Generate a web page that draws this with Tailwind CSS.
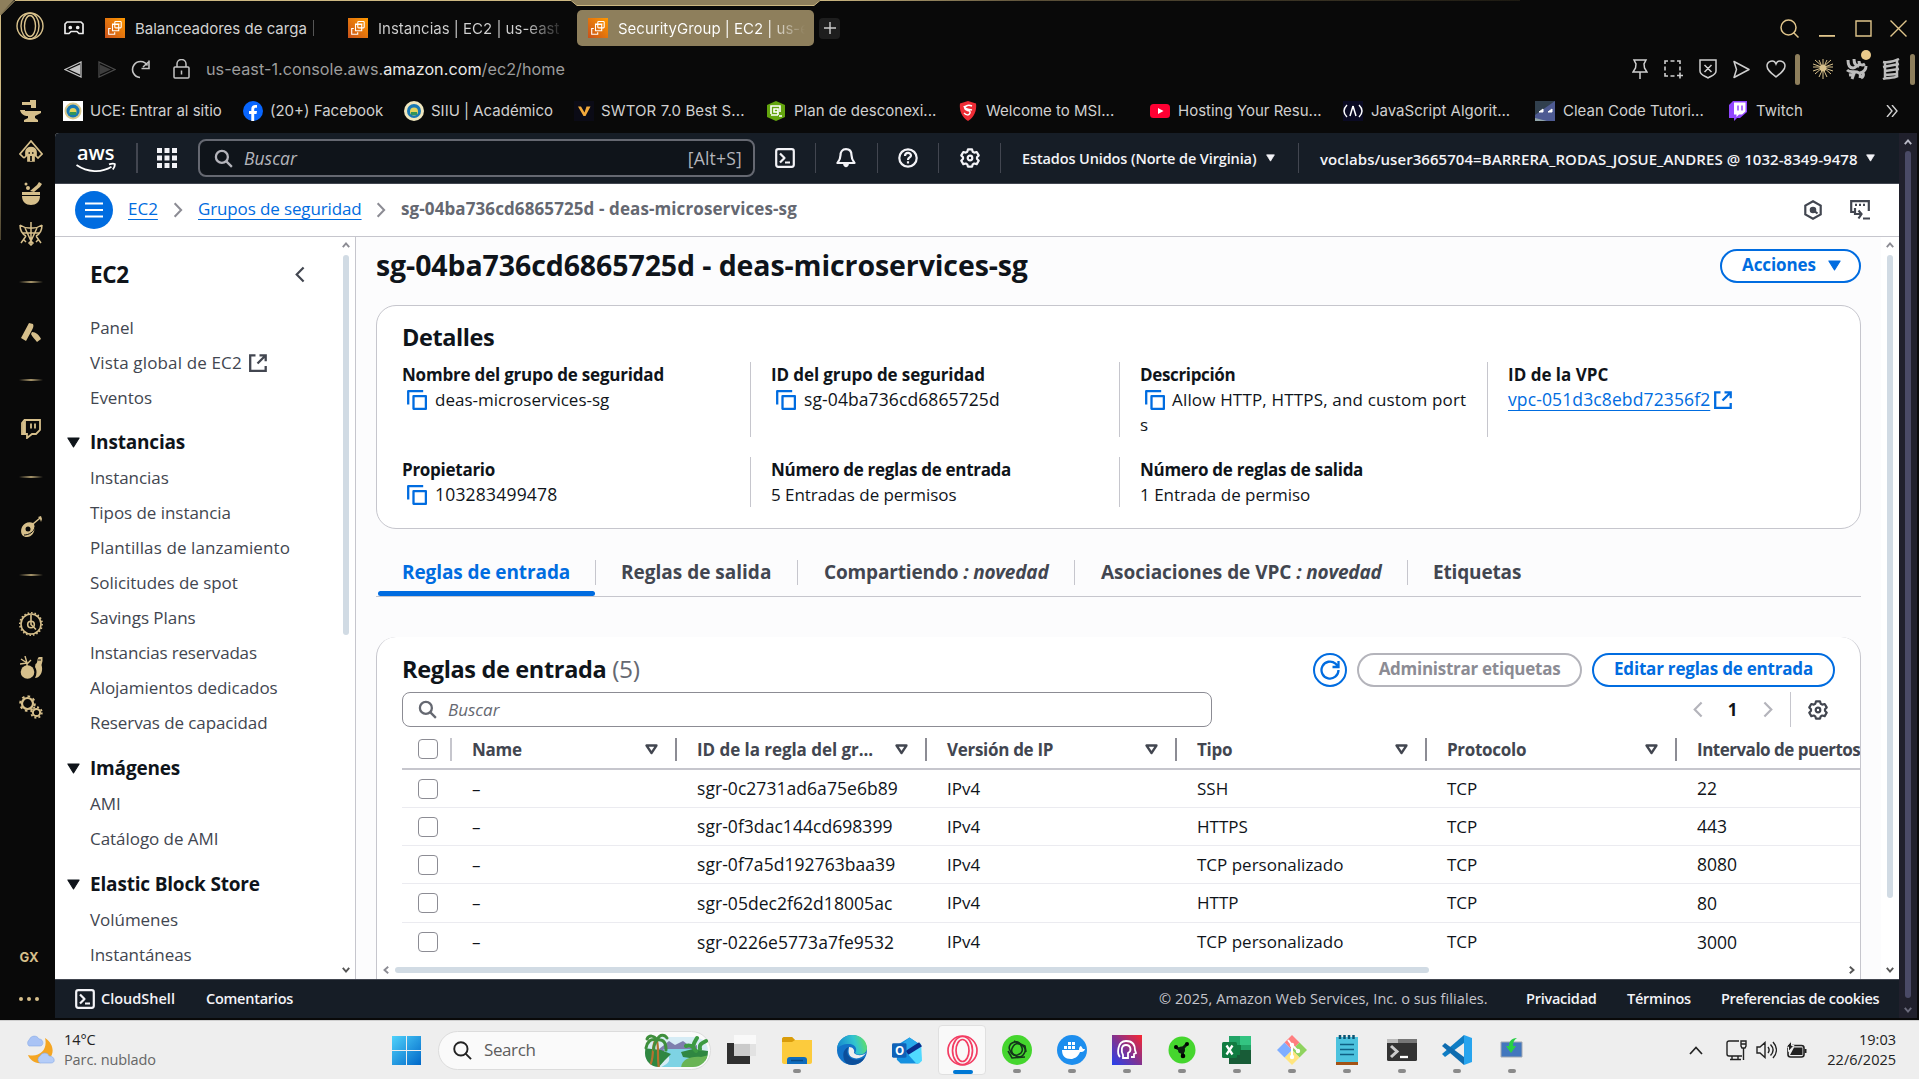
<!DOCTYPE html>
<html lang="es">
<head>
<meta charset="utf-8">
<title>SecurityGroup | EC2 | us-east-1</title>
<script src="https://cdn.jsdelivr.net/npm/@tailwindcss/browser@4"></script>
</head>
<body class="w-[1919px] h-[1079px] overflow-hidden bg-[#090909] font-['Open_Sans',sans-serif] text-[17px] whitespace-nowrap">

<!-- shared symbols -->
<svg class="absolute h-0 w-0">
  <defs><linearGradient id="org" x1="0" y1="1" x2="1" y2="0"><stop offset="0" stop-color="#c8511b"/><stop offset="1" stop-color="#f90"/></linearGradient></defs>
  <symbol id="ec2" viewBox="0 0 20 20"><rect width="20" height="20" fill="url(#org)"/><g fill="none" stroke="#fff" stroke-width="1.1"><rect x="9.8" y="3.500" width="6.400" height="6.400" rx=".8"/><path d="M7.500 9.500V6h7M13.700 12.700V12.700H7.500V6.500h6.200z"/><path d="M5.800 10.500H3.700v5.800h6v-2"/></g></symbol>
  <symbol id="search" viewBox="0 0 20 20"><g fill="none" stroke="currentColor" stroke-width="2.4"><circle cx="8.300" cy="8.300" r="6.300"/><path d="m12.800 12.800 6 6"/></g></symbol>
  <symbol id="shell" viewBox="0 0 20 20"><g fill="none" stroke="currentColor" stroke-width="2.2" stroke-linejoin="round"><rect x="1.200" y="1.200" width="17.600" height="17.600" rx="2"/><path d="m5 5.500 4.500 4.500L5 14.500M10 14.500h5"/></g></symbol>
  <symbol id="gear" viewBox="0 0 20 20"><g fill="none" stroke="currentColor" stroke-width="2.200" stroke-linejoin="round"><path d="M8 1.300h4l.7 2.400 1.500.9 2.500-.6 2 3.400-1.700 1.900v1.500l1.700 1.900-2 3.400-2.500-.6-1.500.9-.7 2.300H8l-.7-2.300-1.500-.9-2.500.6-2-3.400L3 10.800V9.300L1.300 7.400l2-3.400 2.500.6 1.500-.9z"/><circle cx="10" cy="10" r="2.300"/></g></symbol>
  <symbol id="copy" viewBox="0 0 20 20"><g fill="none" stroke="currentColor" stroke-width="2.300" stroke-linejoin="round"><path d="M1.200 14.500V1.200h15"/><rect x="6.500" y="6.200" width="12.400" height="12.600"/></g></symbol>
  <symbol id="ext" viewBox="0 0 18 18"><g fill="none" stroke="currentColor" stroke-width="2.300"><path d="M6.500 1.300H1.200v15.500h15.500V12M10.500 1.300h6.200v6M16.500 1.500 8.500 9.500"/></g></symbol>
  <symbol id="down" viewBox="0 0 12 10"><path d="M.8.8h10.400L6 9.200z" fill="currentColor" stroke="currentColor" stroke-linejoin="round"/></symbol>
  <symbol id="sort" viewBox="0 0 13 11"><path d="M1.500 1.500h10l-5 7.500z" fill="none" stroke="currentColor" stroke-width="2.300" stroke-linejoin="round"/></symbol>
  <symbol id="right" viewBox="0 0 10 18"><path d="m1.200 1.500 7.300 7.500-7.300 7.500" fill="none" stroke="currentColor" stroke-width="2.300"/></symbol>
  <symbol id="left" viewBox="0 0 10 18"><path d="M8.800 1.500 1.500 9l7.300 7.500" fill="none" stroke="currentColor" stroke-width="2.300"/></symbol>
  <symbol id="tri" viewBox="0 0 8 6"><path d="m.8 5.200 3.200-3.700 3.200 3.700" fill="none" stroke="currentColor" stroke-width="1.900"/></symbol>
</svg>

<div class="relative flex h-[1020px] flex-col">
  <!-- window frame accents -->
  <svg class="absolute left-0 top-0 h-[240px] w-[1919px]" viewBox="0 0 1919 240" fill="none">
    <defs><linearGradient id="ft" x1="0" x2="1"><stop offset="0" stop-color="#cdb882"/><stop offset=".3" stop-color="#5c5139"/><stop offset="1" stop-color="#1d1a12"/></linearGradient><linearGradient id="fl" x1="0" y1="0" x2="0" y2="1"><stop offset="0" stop-color="#cdb882"/><stop offset="1" stop-color="#4c4430"/></linearGradient></defs>
    <path d="M0 0h14L0 15z" fill="#8e7f5c"/><path d="M571 0h249l-6 5.500H577z" fill="#8e7f5c"/>
    <path d="M.5 90V15L15 .5h556l6 5h237l6-5" stroke="#cdb882"/><path d="M820 0h700v1H820z" fill="url(#ft)"/><path d="M0 90h1v150H0z" fill="url(#fl)"/>
  </svg>

  <!-- tab strip -->
  <div class="flex h-[46px] shrink-0 items-end font-['Inter',sans-serif] text-[15px] text-[#d2d2d2]">
    <div class="flex h-9 flex-1 items-center pl-4">
      <svg class="mb-1 h-[28px] w-[28px]" viewBox="0 0 28 28" fill="none" stroke="#d9c28c" stroke-width="1.400"><circle cx="14" cy="14" r="13"/><ellipse cx="14" cy="14" rx="9" ry="12.800"/><ellipse cx="14" cy="14" rx="5.500" ry="10.500"/></svg>
      <svg class="ml-5 h-[14px] w-[20px]" viewBox="0 0 20 14" fill="none" stroke="#ececec" stroke-width="1.700" stroke-linejoin="round"><path d="M3 1h14l2 2v9.500h-4l-2-2H7l-2 2H1V3z"/><circle cx="6.300" cy="6.500" r="1" fill="#eee"/><circle cx="13.700" cy="6.500" r="1" fill="#eee"/></svg>
      <svg class="ml-[21px] h-5 w-5"><use href="#ec2"/></svg>
      <span class="ml-[10px] w-[178px] pt-[2px]">Balanceadores de carga</span>
      <span class="h-4 w-px bg-[#555]"></span>
      <svg class="ml-[34px] h-5 w-5"><use href="#ec2"/></svg>
      <span class="ml-[10px] w-[184px] bg-gradient-to-r from-[#d2d2d2] from-80% to-[#222] bg-clip-text pt-[2px] text-transparent">Instancias | EC2 | us-east</span>
      <div class="ml-[15px] flex h-9 w-[237px] items-center rounded-[5px] bg-[#8e7f5c] pl-[11px]">
        <svg class="h-5 w-5"><use href="#ec2"/></svg>
        <span class="ml-[10px] w-[187px] bg-gradient-to-r from-white from-80% to-[#8e7f5c] bg-clip-text pt-[2px] text-transparent">SecurityGroup | EC2 | us-e</span>
      </div>
      <div class="ml-[5px] flex h-[21px] w-[21px] items-center justify-center rounded bg-[#1e1e1e]"><svg class="h-3 w-3" viewBox="0 0 12 12" stroke="#ccc" stroke-width="1.400"><path d="M6 0v12M0 6h12"/></svg></div>
      <svg class="ml-auto h-[19px] w-[19px]" viewBox="0 0 19 19" fill="none" stroke="#e0c58b" stroke-width="1.500"><circle cx="8.500" cy="8.500" r="7.500"/><path d="m13.500 13.500 5 5"/></svg>
      <svg class="ml-5 h-[18px] w-4" viewBox="0 0 16 18"><path d="M0 16h16v1.800H0z" fill="#e0c58b"/></svg>
      <svg class="ml-5 h-[17px] w-[17px]" viewBox="0 0 17 17" fill="none" stroke="#e0c58b" stroke-width="1.400"><path d="M1 1h15v15H1z"/></svg>
      <svg class="ml-[18px] mr-[12px] h-[17px] w-[17px]" viewBox="0 0 17 17" stroke="#e0c58b" stroke-width="1.400"><path d="m.5.5 16 16m0-16-16 16"/></svg>
    </div>
  </div>

  <!-- address bar -->
  <div class="flex h-[46px] shrink-0 items-center pl-16 font-['Inter',sans-serif] text-[16.2px] text-[#9d9d9d]">
    <svg class="h-[17px] w-[18px]" viewBox="0 0 18 17"><path d="M1 8.500 17 1v15z" fill="none" stroke="#c4c4c4" stroke-width="1.300"/><path d="m5 8.500 11-5v10z" fill="#c4c4c4"/></svg>
    <svg class="ml-4 h-[17px] w-[18px]" viewBox="0 0 18 17"><path d="M17 8.500 1 1v15z" fill="none" stroke="#4b4b4b" stroke-width="1.300"/><path d="M13 8.500l-11-5v10z" fill="#3d3d3d"/></svg>
    <svg class="ml-[15px] h-[19px] w-[20px]" viewBox="0 0 20 19" fill="none" stroke="#c4c4c4" stroke-width="1.600"><path d="M9 17.500A8 8 0 1 1 16.500 5.500M18 .5v8h-7.500M12 7l5.500-5"/></svg>
    <svg class="ml-[22px] h-[20px] w-[17px]" viewBox="0 0 17 20" fill="none" stroke="#c4c4c4" stroke-width="1.500"><rect x="1" y="8" width="15" height="11" rx="1"/><path d="M4 8V5a4.500 4.500 0 0 1 9 0v3M8.500 11.500v4"/></svg>
    <span class="ml-4 tracking-[0.020px]">us-east-1.console.aws.<span class="text-[#e9e9e9]">amazon.com</span>/ec2/home</span>
    <div class="ml-auto flex items-center pr-[4px]">
      <svg class="h-[22px] w-[16px]" viewBox="0 0 16 22" fill="none" stroke="#cfcfcf" stroke-width="1.500"><path d="M2 2h12l-2 4 .5 4 2.500 4H1l2.500-4L4 6zM8 14v7"/></svg>
      <svg class="ml-4 h-[20px] w-[19px]" viewBox="0 0 19 20" fill="none" stroke="#cfcfcf" stroke-width="1.600"><path d="M1 5V2h3M6.500 2h4M13 2h3v3M16 7.500v4M1 7.500v4M1 14v3h3M6.500 17h4M16 13.500v6M13 16.500h6"/></svg>
      <svg class="ml-4 h-[20px] w-[18px]" viewBox="0 0 18 20" fill="none" stroke="#cfcfcf" stroke-width="1.500"><path d="M1 1h16v11c0 4-5 5-8 7-3-2-8-3-8-7zM5.500 6l7 7m0-7-7 7"/></svg>
      <svg class="ml-4 h-[19px] w-[17px]" viewBox="0 0 17 19" fill="none" stroke="#cfcfcf" stroke-width="1.500" stroke-linejoin="round"><path d="M1 1.500 16 9.500 1 17.500l2.500-8z"/></svg>
      <svg class="ml-4 h-[18px] w-[20px]" viewBox="0 0 20 18" fill="none" stroke="#cfcfcf" stroke-width="1.500"><path d="M10 17C5 13 1 10 1 6c0-5 7-7 9-2 2-5 9-3 9 2 0 4-4 7-9 11z"/></svg>
      <span class="ml-[9px] h-[31px] w-[5px] rounded bg-[#8e7f5c]"></span>
      <svg class="ml-[13px] h-[20px] w-[20px]" viewBox="0 0 20 20" stroke="#d9c28c" stroke-width="1"><path d="M10 0v20M0 8h20M2 1l16 14M18 1 2 15M6 1l8 17M14 1 6 18M0 12l20-7M20 12 0 5"/><circle cx="10" cy="9" r="3" fill="#d9c28c"/></svg>
      <div class="relative ml-[13px] h-[22px] w-[22px]"><svg class="h-[22px] w-[22px]" viewBox="0 0 22 22" fill="none" stroke="#bdbdbd" stroke-width="3"><path d="M2 2c0 6 2 8 5 8s4-4 7-3M8 1c0 5 2 7 5 7M13 3c0 4 3 5 6 3M1 12c3 3 7 1 10 2s4 2 3 6M20 8c0 4-2 6-6 7M6 21l3-8M3 17l6-1M17 15c1 2 0 4-2 5"/></svg><span class="absolute -top-[8px] left-[15px] h-[10px] w-[10px] rounded-full bg-[#e9c98a]"></span></div>
      <svg class="ml-[14px] h-[22px] w-[18px]" viewBox="0 0 18 22" fill="none" stroke="#bdbdbd" stroke-width="2.500"><path d="M1 4c5 1 10 0 16-3M1 9l16-3M3 13l14-2M3 17l13-1M1 21c4-2 10 0 15-3M3 4v17M15 2v16"/></svg>
      <span class="ml-[10px] h-[31px] w-[5px] rounded bg-[#8e7f5c]"></span>
    </div>
  </div>

  <div class="flex flex-1">
    <!-- browser side rail -->
    <div id="rail" class="flex w-[55px] shrink-0 flex-col items-center pl-[7px] text-[#d6bf8b]">
      <div class="flex h-[38px] items-center"><svg class="h-6 w-6" viewBox="0 0 24 24" fill="currentColor"><path d="M11 1h6v8h-5V6H3V3h8zM1 11h5v1h16v2l-6 3v2l3 2v2H5v-2l4-2v-2c-4 0-7-2-8-6z"/></svg></div>
      <div class="flex h-[44px] items-center"><svg class="h-6 w-6" viewBox="0 0 24 24" fill="none" stroke="currentColor" stroke-width="1.700"><path d="M5 18 1 14 12 1l11 13-4 4-3-3M8 15l-3 3"/><path d="M7 12c0-6 10-6 10 0v3l-2 1v5H9v-5l-2-1z" fill="currentColor"/><path d="M9.500 13h1.500M13 13h1.500M12 16v5" stroke="#090909"/></svg></div>
      <div class="flex h-[40px] items-center"><svg class="h-6 w-6" viewBox="0 0 24 24" fill="currentColor"><path d="M3 10h18v3H3zM3 14h18c0 6-4 9-9 9s-9-3-9-9zM11 9l7-6 2-3 3 2-2 3-6 5z"/><circle cx="9" cy="6" r="2"/><circle cx="7" cy="2" r="1.500"/></svg></div>
      <div class="flex h-[38px] items-center pt-[2px]"><svg class="h-6 w-6" viewBox="0 0 24 24" fill="none" stroke="currentColor" stroke-width="1.500"><path d="M1 3c3 2 6 3 9 3M23 3c-3 2-6 3-9 3M1 3c0 5 2 9 6 11M23 3c0 5-2 9-6 11M12 0v22M10 6h4M6 6l6 13 6-13M3 11h18M7 14l-5 7M17 14l5 7M4 17l3 3M20 17l-3 3M12 19l-2 2 2 2 2-2z"/></svg></div>
      <div class="flex h-[60px] items-center"><span class="h-[2px] w-6 bg-gradient-to-r from-transparent via-[#a8966b] to-transparent"></span></div>
      <div class="flex h-[40px] items-center"><svg class="h-5 w-5" viewBox="0 0 20 20" fill="currentColor"><path d="M8 1l4 1c1 2 0 4-1 6L5 19l-5-3zM11 10c4 0 7 3 9 7l-4 3c-2-3-5-5-6-8z"/></svg></div>
      <div class="flex h-[56px] items-center"><span class="h-[2px] w-6 bg-gradient-to-r from-transparent via-[#a8966b] to-transparent"></span></div>
      <div class="flex h-[42px] items-center"><svg class="h-5 w-5" viewBox="0 0 20 20" fill="none" stroke="currentColor" stroke-width="1.800"><path d="M3.500 1H19v10l-4 4h-4l-5 4v-4H1V4z"/><path d="M4 1.500V14M2.500 3v11M10 4.500v5M14 4.500v5"/></svg></div>
      <div class="flex h-[54px] items-center"><span class="h-[2px] w-6 bg-gradient-to-r from-transparent via-[#a8966b] to-transparent"></span></div>
      <div class="flex h-[44px] items-center"><svg class="h-[21px] w-[21px]" viewBox="0 0 21 21" fill="currentColor"><path d="M12 7l6-5-1-1 3-1 1 3-1 3-1-3-6 5c2 6-1 13-7 13S-1 15 1 11s7-6 11-4z"/><circle cx="7" cy="13" r="2.500" fill="#090909"/><path d="M3 19c5 0 10-3 11-8" stroke="#090909" fill="none"/></svg></div>
      <div class="flex h-[54px] items-center"><span class="h-[2px] w-6 bg-gradient-to-r from-transparent via-[#a8966b] to-transparent"></span></div>
      <div class="flex h-[44px] items-center"><svg class="h-6 w-6" viewBox="0 0 24 24" fill="none" stroke="currentColor" stroke-width="1.600"><circle cx="12" cy="12" r="10"/><circle cx="12" cy="12" r="11.200" stroke-dasharray="1.500 2"/><circle cx="12" cy="12.500" r="3.300"/><path d="M12 3v9.500l5 5"/></svg></div>
      <div class="flex h-[42px] items-center"><svg class="h-[23px] w-[23px]" viewBox="0 0 23 23" fill="currentColor"><circle cx="7.500" cy="16" r="6.800"/><path d="M1 3l6 4M5 0l2 7M0 8l7-1M11 4 7 8v3" stroke="currentColor" stroke-width="1.400" fill="none"/><path d="M15.500 8c3-1 1-7 4-7h3v4l-1 4c2 6-1 13-6.500 13 2-4 2-8 0-11z"/><path d="M18 4h3" stroke="#090909"/></svg></div>
      <div class="flex h-[38px] items-center"><svg class="h-6 w-6" viewBox="0 0 24 24" fill="none" stroke="currentColor"><circle cx="8.500" cy="8.500" r="5.500" stroke-width="2.200"/><circle cx="8.500" cy="8.500" r="7.300" stroke-width="2" stroke-dasharray="2.600 3.100"/><circle cx="17.500" cy="17.500" r="3.600" stroke-width="2"/><circle cx="17.500" cy="17.500" r="5.300" stroke-width="1.800" stroke-dasharray="2 2.150"/></svg></div>
      <div class="flex-1"></div>
      <div class="flex h-[38px] items-center pr-1 font-['Inter',sans-serif] text-[13px] font-bold">GX</div>
      <div class="flex h-[43px] items-center gap-[4px] pr-1"><span class="h-[4px] w-[4px] rounded-full bg-[#d6bf8b]"></span><span class="h-[4px] w-[4px] rounded-full bg-[#d6bf8b]"></span><span class="h-[4px] w-[4px] rounded-full bg-[#d6bf8b]"></span></div>
    </div>

    <div class="flex w-[1864px] flex-col">
      <!-- bookmarks -->
      <div class="flex h-[41px] shrink-0 items-center pb-[3px] pl-2 font-['Inter',sans-serif] text-[15px] text-[#d0d0d0]">
        <div class="flex w-[180px] items-center gap-[7px]"><svg class="h-5 w-5" viewBox="0 0 20 20"><path fill="#fff" d="M0 0h20v20H0z"/><circle cx="10" cy="10" r="8.500" fill="#d9c98c"/><circle cx="10" cy="10" r="6.500" fill="#1878b4"/><circle cx="10" cy="10.500" r="3.500" fill="#e4d45a"/><path d="M7 11h6v3H7z" fill="#31955a"/></svg>UCE: Entrar al sitio</div>
        <div class="flex w-[161px] items-center gap-[7px]"><svg class="h-5 w-5" viewBox="0 0 20 20"><circle cx="10" cy="10" r="10" fill="#0866ff"/><path d="M8.300 20v-7H6v-3h2.300V8.200C8.300 5.300 10 4 12.300 4l1.700.1v2.600h-1.300c-1.100 0-1.500.6-1.500 1.500V10H14l-.5 3h-2.300v7z" fill="#fff"/></svg>(20+) Facebook</div>
        <div class="flex w-[170px] items-center gap-[7px]"><svg class="h-5 w-5" viewBox="0 0 20 20"><circle cx="10" cy="10" r="10" fill="#efe6bd"/><circle cx="10" cy="10" r="7" fill="#1878b4"/><circle cx="10" cy="10.500" r="4" fill="#e4d45a"/><path d="M7 11h6v3H7z" fill="#31955a"/></svg>SIIU | Académico</div>
        <div class="flex w-[192px] items-center gap-[7px]"><svg class="h-5 w-5" viewBox="0 0 20 20"><path fill="#0b0b16" d="M0 0h20v20H0z"/><path d="M4 5.500h3l3.500 6 2-6h4L11.500 15h-2z" fill="#f2a93b"/></svg><span class="tracking-[0.120px]">SWTOR 7.0 Best S...</span></div>
        <div class="flex w-[192px] items-center gap-2"><svg class="h-5 w-5" viewBox="0 0 20 20"><path d="m10 0 9 4v12l-9 4-9-4V4z" fill="#63a50e"/><g fill="none" stroke="#fff" stroke-width="1.600"><path d="M5 13V5h9v6M5 14h7M12 8H8v3h4zM12 14v-3M13 15h3"/></g></svg>Plan de desconexi...</div>
        <div class="flex w-[192px] items-center gap-2"><svg class="h-5 w-5" viewBox="0 0 20 20"><path d="m10 0 8 2.500c1 7-2 14-8 17.500C4 16.500 1 9.500 2 2.500z" fill="#ee2c35"/><path d="M14 5c-5-2-8 1-7 3s6 1 5 4-4 2-6 0M6 5c1 4 4 3 8 4" stroke="#fff" stroke-width="1.500" fill="none"/></svg>Welcome to MSI...</div>
        <div class="flex w-[193px] items-center gap-2"><svg class="h-5 w-5" viewBox="0 0 20 20"><rect y="3" width="20" height="14" rx="3.500" fill="#ff0033"/><path d="m8 7 5.500 3L8 13z" fill="#fff"/></svg>Hosting Your Resu...</div>
        <div class="flex w-[192px] items-center gap-2"><svg class="h-5 w-5" viewBox="0 0 20 20"><path fill="#0a0a23" d="M0 0h20v20H0z"/><path d="M4 4c-4 4-4 8 0 12M16 4c4 4 4 8 0 12M10 5l-3 10M10 5l3 10" stroke="#fff" fill="none" stroke-width="1.500"/></svg>JavaScript Algorit...</div>
        <div class="flex w-[194px] items-center gap-2"><svg class="h-5 w-5" viewBox="0 0 20 20"><path fill="#4e5b93" d="M0 0h20v20H0z"/><path fill="#31404e" d="M0 0h20L0 14z"/><path fill="#92a6ab" d="M0 17l12 3H0z"/><path d="m4 11 4-3v3zM13 11l4-3v3z" fill="#fff" stroke="#fff"/></svg>Clean Code Tutori...</div>
        <div class="flex items-center gap-[9px]"><svg class="h-5 w-[18px]" viewBox="0 0 18 20"><path d="M4 0h14v11l-7 6H8l-3 3v-3H0V4z" fill="#9146ff"/><path d="M5 1.500h11.500v9L13 13.500h-3L7.500 16v-2.500H5z" fill="#fff"/><path d="M9 4.500v5M13 4.500v5" stroke="#9146ff" stroke-width="1.500"/></svg>Twitch</div>
        <svg class="ml-auto mr-[21px] h-3 w-3" viewBox="0 0 12 12" fill="none" stroke="#d0d0d0" stroke-width="1.400"><path d="m1 0 5 6-5 6M6 0l5 6-5 6"/></svg>
      </div>

      <div class="flex h-[885px] w-[1862px] overflow-hidden rounded-tl">
        <div class="flex w-[1844px] flex-col bg-white text-[#0f141a]">
          <!-- console header -->
          <header class="flex h-[51px] shrink-0 items-center border-b border-[#424650] bg-[#161d26] pl-[21px] text-[#f3f3f7]">
            <svg class="h-[32px] w-[40px]" viewBox="0 -5 40 32"><text x="1" y="13" font-family="Open Sans" font-weight="600" font-size="19.500" textLength="37.500" lengthAdjust="spacingAndGlyphs" fill="#fff">aws</text><path d="M.5 18c11 7.500 25 8 35 1.800M33 17.300c3-1 5-.8 5.800-.3.200 1.600-.5 3.600-2 5.500" fill="none" stroke="#fff" stroke-width="1.800"/></svg>
            <span class="ml-5 h-[30px] w-[2px] bg-[#424650]"></span>
            <svg class="ml-[19px] h-5 w-5" viewBox="0 0 20 20" fill="#f3f3f7"><path d="M0 0h5v5H0zM7.500 0h5v5h-5zM15 0h5v5h-5zM0 7.500h5v5H0zM7.500 7.500h5v5h-5zM15 7.500h5v5h-5zM0 15h5v5H0zM7.500 15h5v5h-5zM15 15h5v5h-5z"/></svg>
            <div class="ml-[21px] flex h-[38px] w-[557px] items-center rounded-lg border-2 border-[#656871] bg-[#0f141a] pl-[14px] pr-[11px] text-[#b4b4bb]"><svg class="h-[19px] w-[19px]"><use href="#search"/></svg><span class="ml-[11px] flex-1 text-[17.500px] italic">Buscar</span><span class="text-[17.500px] tracking-[0.200px]">[Alt+S]</span></div>
            <svg class="ml-5 h-5 w-5"><use href="#shell"/></svg>
            <span class="ml-5 h-[30px] w-px bg-[#424650]"></span>
            <svg class="ml-5 h-5 w-5" viewBox="0 0 20 20" fill="none" stroke="currentColor" stroke-width="2.200" stroke-linejoin="round"><path d="M10 1.200c-4 0-5.500 3-5.500 6C4.500 11 3 13 1.500 15h17C17 13 15.500 11 15.500 7.200c0-3-1.500-6-5.500-6z"/><path d="M7 15.500c.5 5 5.500 5 6 0z" fill="currentColor" stroke="none"/></svg>
            <span class="ml-[21px] h-[30px] w-px bg-[#424650]"></span>
            <svg class="ml-5 h-5 w-5" viewBox="0 0 20 20" fill="none" stroke="currentColor" stroke-width="2.200"><circle cx="10" cy="10" r="8.700"/><path d="M7 8c0-4 6-4 6-.5 0 2-3 2-3 4.500M10 13.300v2.200"/></svg>
            <span class="ml-5 h-[30px] w-px bg-[#424650]"></span>
            <svg class="ml-[21px] h-5 w-5"><use href="#gear"/></svg>
            <span class="ml-5 h-[30px] w-px bg-[#424650]"></span>
            <span class="ml-[21px] w-[244px] pt-[2px] text-[14.500px] font-semibold tracking-[-0.12px]">Estados Unidos (Norte de Virginia)</span><svg class="h-2 w-[9px]"><use href="#down"/></svg>
            <span class="ml-[23px] h-[30px] w-px bg-[#424650]"></span>
            <span class="ml-[21px] w-[546px] pt-[2px] text-[15px] font-semibold tracking-[0.060px]">voclabs/user3665704=BARRERA_RODAS_JOSUE_ANDRES @ 1032-8349-9478</span><svg class="h-2 w-[9px]"><use href="#down"/></svg>
          </header>

          <!-- breadcrumbs -->
          <div class="flex h-[53px] shrink-0 items-center border-b border-[#c6c6cd] pl-5 text-[17px]">
            <span class="flex h-[38px] w-[38px] items-center justify-center rounded-full bg-[#006ce0]"><svg class="h-4 w-[18px]" viewBox="0 0 18 16" stroke="#fff" stroke-width="2.200"><path d="M0 1.500h18M0 8h18M0 14.500h18"/></svg></span>
            <span class="ml-[15px] w-[45px] pb-[2px] text-[#006ce0] underline underline-offset-4">EC2</span>
            <svg class="h-4 w-[10px] text-[#8c8c94]"><use href="#right"/></svg>
            <span class="ml-[15px] w-[178px] pb-[2px] tracking-[-0.13px] text-[#006ce0] underline underline-offset-4">Grupos de seguridad</span>
            <svg class="h-4 w-[10px] text-[#8c8c94]"><use href="#right"/></svg>
            <span class="ml-[15px] pb-[2px] text-[17px] font-bold tracking-[0.1px] text-[#656871]">sg-04ba736cd6865725d - deas-microservices-sg</span>
            <svg class="ml-auto h-[20px] w-[18px] text-[#424650]" viewBox="0 0 18 20" fill="none" stroke="currentColor" stroke-width="2.200"><path d="m9 1.300 7.700 4.300v8.800L9 18.700l-7.700-4.300V5.600z"/><circle cx="9" cy="10" r="2.200" fill="currentColor"/><path d="m9 10 4.500 3.500"/></svg>
            <svg class="ml-[28px] mr-[29px] h-5 w-5 text-[#424650]" viewBox="0 0 20 20" fill="none" stroke="currentColor" stroke-width="2.200"><path d="M4 12H1.200V1.200h17.600V11M5 4.800h2M9 4.800h2M13 4.800h2M5 8v6h6M8.500 10.500l3 3.500-3 4.500M13 18.500h7"/></svg>
          </div>

          <div class="flex h-[742px] shrink-0">
            <!-- service navigation -->
            <nav class="flex w-[301px] shrink-0 border-r border-[#c6c6cd] text-[17px] text-[#424650]">
              <div class="w-[288px]">
                <div class="flex h-[73px] items-center justify-between pl-[35px] pr-[38px] pt-[2px] text-[22.500px] font-bold tracking-[-0.3px] text-[#0f141a]">EC2<svg class="h-[17px] w-[10px] text-[#424650]"><use href="#left"/></svg></div>
                <div id="nav"></div>
              </div>
              <div class="flex w-[6px] flex-col items-center pt-[5px] text-[#8c8c94]"><svg class="h-[6px] w-[8px] shrink-0"><use href="#tri"/></svg><span class="mt-[7px] h-[380px] w-[6px] rounded-full bg-[#d1dbe4]"></span><svg class="mb-[6px] mt-auto h-[6px] w-[8px] shrink-0 rotate-180 text-[#555]"><use href="#tri"/></svg></div>
            </nav>

            <!-- security group -->
            <main class="h-[742px] w-[1525px] shrink-0 overflow-hidden bg-[#fcfcfd] pl-5">
              <div class="flex w-[1485px] items-center justify-between pt-3">
                <h1 class="pb-[2px] text-[28.500px] font-bold leading-8 tracking-[-0.100px]">sg-04ba736cd6865725d - deas-microservices-sg</h1>
                <div class="flex h-[34px] w-[141px] items-center rounded-full border-2 border-[#006ce0] bg-white pb-[2px] pl-5 text-[17px] font-bold tracking-[-0.1px] text-[#006ce0]"><span class="w-[86px]">Acciones</span><svg class="h-[11px] w-[13px]"><use href="#down"/></svg></div>
              </div>

              <section class="mt-[22px] h-[224px] w-[1485px] rounded-[20px] border border-[#c6c6cd] bg-white pl-[25px] pt-[15px]">
                <h2 class="text-[23.500px] font-bold leading-8 tracking-[-0.4px]">Detalles</h2>
                <div class="mt-[9px] grid grid-cols-[348px_369px_368px_1fr] grid-rows-[75px_50px] gap-y-5 text-[17px] leading-[25px]">
                  <div><div class="font-bold tracking-[-0.2px]">Nombre del grupo de seguridad</div><div class="flex items-center"><svg class="ml-[5px] mr-2 h-5 w-5 text-[#006ce0]"><use href="#copy"/></svg><span>deas-microservices-sg</span></div></div>
                  <div class="border-l border-[#c6c6cd] pl-5"><div class="font-bold tracking-[-0.1px]">ID del grupo de seguridad</div><div class="flex items-center"><svg class="ml-[5px] mr-2 h-5 w-5 text-[#006ce0]"><use href="#copy"/></svg><span class="text-[17.500px] tracking-[0.1px]">sg-04ba736cd6865725d</span></div></div>
                  <div class="border-l border-[#c6c6cd] pl-5"><div class="font-bold tracking-[-0.35px]">Descripción</div><div class="flex items-center"><svg class="ml-[5px] mr-[7px] h-5 w-5 text-[#006ce0]"><use href="#copy"/></svg><span class="tracking-[0.17px]">Allow HTTP, HTTPS, and custom port</span></div>s</div>
                  <div class="border-l border-[#c6c6cd] pl-5"><div class="font-bold">ID de la VPC</div><div class="flex items-center text-[#006ce0]"><span class="pr-1 text-[17.500px] tracking-[0.120px] underline underline-offset-4">vpc-051d3c8ebd72356f2</span><svg class="h-[18px] w-[18px]"><use href="#ext"/></svg></div></div>
                  <div><div class="font-bold tracking-[-0.27px]">Propietario</div><div class="flex items-center"><svg class="ml-[5px] mr-2 h-5 w-5 text-[#006ce0]"><use href="#copy"/></svg><span class="text-[17.500px] tracking-[0.2px]">103283499478</span></div></div>
                  <div class="border-l border-[#c6c6cd] pl-5"><div class="font-bold tracking-[-0.3px]">Número de reglas de entrada</div><div class="tracking-[-0.050px]">5 Entradas de permisos</div></div>
                  <div class="border-l border-[#c6c6cd] pl-5"><div class="font-bold tracking-[-0.29px]">Número de reglas de salida</div><div>1 Entrada de permiso</div></div>
                </div>
              </section>

              <div class="mt-[22px] flex h-[46px] w-[1485px] border-b border-[#c6c6cd] text-[19px] font-bold text-[#424650]">
                <div class="relative flex h-[42px] w-[219px] items-center pl-[26px] tracking-[-0.1px] text-[#006ce0]">Reglas de entrada<span class="absolute left-[2px] top-[40px] h-[5px] w-[217px] rounded-full bg-[#006ce0]"></span></div>
                <div class="my-[9px] flex h-[25px] w-[202px] items-center border-l border-[#c6c6cd] pl-[25px]">Reglas de salida</div>
                <div class="my-[9px] flex h-[25px] w-[277px] items-center whitespace-pre border-l border-[#c6c6cd] pl-[26px] tracking-[-0.15px]">Compartiendo <i class="tracking-[-0.2px]">: novedad</i></div>
                <div class="my-[9px] flex h-[25px] w-[333px] items-center whitespace-pre border-l border-[#c6c6cd] pl-[26px] tracking-[-0.05px]">Asociaciones de VPC <i class="tracking-[-0.2px]">: novedad</i></div>
                <div class="my-[9px] flex h-[25px] items-center border-l border-[#c6c6cd] pl-[25px] tracking-[-0.15px]">Etiquetas</div>
              </div>

              <section class="mt-[40px] h-[343px] w-[1485px] overflow-hidden rounded-t-[20px] border-x border-[#c6c6cd] bg-white">
                <div class="flex h-[50px] items-end pl-[25px] pr-[25px] text-[17px] font-bold">
                  <h2 class="flex-1 pb-[2px] text-[23.500px] leading-8 tracking-[-0.34px]">Reglas de entrada <span class="text-[24.500px] font-normal text-[#656871]">(5)</span></h2>
                  <span class="flex h-[34px] w-[34px] items-center justify-center rounded-full border-2 border-[#006ce0] text-[#006ce0]"><svg class="h-5 w-5" viewBox="0 0 20 20" fill="none" stroke="currentColor" stroke-width="2.300"><path d="M18.500 10A8.500 8.500 0 1 1 15.500 3.600L18 6.500M18.500 1v6h-6"/></svg></span>
                  <span class="ml-[10px] flex h-[34px] w-[225px] items-center justify-center rounded-full border-2 border-[#b4b4bb] pb-[2px] tracking-[-0.27px] text-[#8c8c94]">Administrar etiquetas</span>
                  <span class="ml-[10px] flex h-[34px] w-[243px] items-center justify-center rounded-full border-2 border-[#006ce0] pb-[2px] tracking-[-0.2px] text-[#006ce0]">Editar reglas de entrada</span>
                </div>
                <div class="mt-[5px] flex items-center pl-[25px]">
                  <div class="flex h-[35px] w-[810px] items-center rounded-lg border border-[#8c8c94] pl-[15px] italic text-[#656871]"><svg class="mr-[11px] h-[19px] w-[19px]"><use href="#search"/></svg>Buscar</div>
                  <svg class="ml-[481px] h-[17px] w-[10px] text-[#b4b4bb]"><use href="#left"/></svg>
                  <span class="w-[60px] pr-px text-center font-bold">1</span>
                  <svg class="h-[17px] w-[10px] text-[#b4b4bb]"><use href="#right"/></svg>
                  <span class="ml-[17px] h-[35px] w-px bg-[#c6c6cd]"></span>
                  <svg class="ml-[17px] h-5 w-5 text-[#424650]"><use href="#gear"/></svg>
                </div>
                <div class="ml-[25px]">
                  <div id="head" class="flex h-[43px] items-center border-b-2 border-[#c6c6cd] pt-[3px] font-bold tracking-[-0.3px] text-[#424650]"></div>
                  <div id="rows"></div>
                </div>
                <div class="mt-[3px] flex h-[12px] items-center pl-[5px] pr-[4px] text-[#8c8c94]"><svg class="h-[6px] w-[8px] -rotate-90"><use href="#tri"/></svg><span class="ml-[5px] h-[6px] w-[1034px] rounded-full bg-[#d1dbe4]"></span><svg class="ml-auto h-[6px] w-[8px] rotate-90 text-[#555]"><use href="#tri"/></svg></div>
              </section>
            </main>
            <div class="flex w-[18px] flex-col items-center pr-[1px] pt-[5px] text-[#8c8c94]"><svg class="h-[6px] w-[8px] shrink-0"><use href="#tri"/></svg><span class="mt-[7px] h-[643px] w-[6px] rounded-full bg-[#d1dbe4]"></span><svg class="mb-[6px] mt-auto h-[6px] w-[8px] shrink-0 rotate-180 text-[#555]"><use href="#tri"/></svg></div>
          </div>

          <!-- footer -->
          <footer class="flex h-[39px] shrink-0 items-center border-t border-[#424650] bg-[#161d26] pl-5 text-[14.500px] font-semibold text-[#f3f3f7]">
            <svg class="h-5 w-5"><use href="#shell"/></svg>
            <span class="ml-[6px] w-[105px]">CloudShell</span>
            <span class="tracking-[-0.25px]">Comentarios</span>
            <span class="ml-auto w-[367px] font-normal tracking-[0.080px] text-[#c6c6cd]">© 2025, Amazon Web Services, Inc. o sus filiales.</span>
            <span class="w-[101px] tracking-[-0.25px]">Privacidad</span>
            <span class="w-[94px] tracking-[-0.25px]">Términos</span>
            <span class="w-[178px] tracking-[-0.3px]">Preferencias de cookies</span>
          </footer>
        </div>
        <!-- page scrollbar -->
        <div class="flex w-[18px] flex-col items-center bg-[#20202c] pt-[6px] text-[#b9b9c6]"><svg class="h-[6px] w-[8px] shrink-0"><use href="#tri"/></svg><span class="mt-[6px] h-[847px] w-[6px] rounded-full bg-[#4a4a66]"></span><svg class="mb-[5px] mt-auto h-[6px] w-[8px] shrink-0 rotate-180 text-[#6b6b7c]"><use href="#tri"/></svg></div>
      </div>
      <div class="h-[2px]"></div>
    </div>
  </div>
</div>

<!-- taskbar -->
<div class="flex h-[59px] items-center border-t border-[#cfcfcf] bg-[#eeeeee] pl-[25px]">
  <svg class="h-[30px] w-[30px]" viewBox="0 0 30 30"><path d="M20 3c12 8 9 22-3 25-7 1-12-3-14-8 12 3 20-6 17-17z" fill="#f5a623"/><path d="M4 11a4 4 0 0 1 0-6c2-5 8-5 10-1 5 0 5 7 1 7z" fill="#a9c3f5" stroke="#86a9e6" stroke-width=".6"/><path d="M15 28a4 4 0 0 1 0-7c2-4 8-4 9 0 6 0 7 7 2 7z" fill="#b5cdf8" stroke="#86a9e6" stroke-width=".6"/></svg>
  <div class="ml-[9px] w-[328px] text-[14.500px] leading-5 tracking-[-0.100px]"><div class="text-[#222]">14°C</div><div class="text-[#666]">Parc. nublado</div></div>
  <svg class="h-[29px] w-[29px]" viewBox="0 0 29 29"><defs><linearGradient id="wn" x1="0" y1="0" x2="1" y2="1"><stop offset="0" stop-color="#4fd2fb"/><stop offset="1" stop-color="#0067c8"/></linearGradient></defs><path d="M0 0h14v14H0zM15 0h14v14H15zM0 15h14v14H0zM15 15h14v14H15z" fill="url(#wn)"/></svg>
  <div class="ml-[17px] flex h-[39px] w-[273px] items-center rounded-full border border-[#dcdcdc] bg-[#fafafa] pl-[14px] text-[17px] text-[#5d5d5d]">
    <svg class="h-[19px] w-[19px] text-[#222]" viewBox="0 0 20 20"><g fill="none" stroke="currentColor" stroke-width="2"><circle cx="8.300" cy="8.300" r="7"/><path d="m13 13 6 6"/></g></svg><span class="ml-3 w-[159px] tracking-[-0.4px]">Search</span>
    <svg class="h-[38px] w-[65px]" viewBox="0 0 65 38"><defs><clipPath id="oc"><path d="M14 6h36c9 0 15 6 15 14 0 10-7 16-15 16H16C8 36 2 30 2 22 2 14 7 6 14 6z"/></clipPath></defs><g clip-path="url(#oc)"><path fill="#d6ecf5" d="M0 0h66v38H0z"/><path fill="#7e7fae" d="m16 18 10-8 6 4 8-4 8 6 6-2v6H16z"/><path fill="#7ed3e4" d="M20 18h34L42 38H14c14-6 16-10 6-20z"/><path fill="#2f8741" d="M0 17l18 2 10 4-6 6-8 9H0zM38 21l12-3 16 2v10l-26-4z"/><path fill="#69b455" d="M38 38c0-9 8-13 20-12l8-2v14z"/><path d="M12 10C8 18 12 28 6 36M14 10c2 8 0 16 2 28" stroke="#b5722f" stroke-width="2.200" fill="none"/></g><path d="M13 9C8 7 4 11 3 17M14 9c-3-5-8-5-10-1M14 9c3-7 8-5 10-2M14 9c7-1 9 3 9 10M14 9c-2 3-4 6-3 10" stroke="#3f8f3c" stroke-width="3" fill="none" stroke-linecap="round"/><path d="M53 20c-5-4-2-8 1-13M57 18c-1-5 2-6 6-8M50 16c-3-2-4-2-7-1" stroke="#3c9a43" stroke-width="4" fill="none" stroke-linecap="round"/></svg>
  </div>
  <div class="ml-4 flex items-center gap-[25px]">
    <svg class="h-[32px] w-[30px]" viewBox="0 0 30 32"><path d="M0 9h23v21H0z" fill="#303030"/><path d="M7 1h22v21H7z" fill="#e0e0e0" opacity=".88"/><path d="M7 1h22v9H7z" fill="#fff" opacity=".8"/></svg>
    <div class="relative"><svg class="h-[30px] w-[30px]" viewBox="0 0 30 30"><path d="M0 4c0-1 1-2 2-2h8l3 3h17v22c0 1-1 2-2 2H2c-1 0-2-1-2-2z" fill="#fccb3d"/><path d="M0 7V4c0-1 1-2 2-2h8l3 3-3 2z" fill="#d99c0b"/><path d="M5 29v-4c0-2 1-3 3-3h14c2 0 3 1 3 3v4z" fill="#0f6cbd"/><path d="M9 25.500h12" stroke="#0a4a85" stroke-width="1.500"/></svg><span class="absolute left-[11px] top-[34px] h-1 w-2 rounded-full bg-[#8a8a8a]"></span></div>
    <svg class="h-[30px] w-[30px]" viewBox="0 0 30 30"><defs><linearGradient id="eg" x1="0" y1=".5" x2="1" y2=".3"><stop offset="0" stop-color="#1588cf"/><stop offset=".6" stop-color="#32c5cf"/><stop offset="1" stop-color="#64e05f"/></linearGradient></defs><circle cx="15" cy="15" r="15" fill="#1273c8"/><path d="M0 14C1-4 29-5 30 13c0 7-9 8-12 5 3-4 0-9-6-9C6 9 2 11 0 14z" fill="url(#eg)"/><path d="M11 20c4 6 12 6 17 2-3 8-14 10-19 6-4-5-4-14 3-16-2 3-2 6-1 8z" fill="#0c4f9b"/><path d="M12 12c4 0 6 3 5 6 3 3 8 3 12 0-4 7-15 7-17 1-1-3 0-5 0-7z" fill="#eee"/></svg>
    <svg class="h-[30px] w-[30px]" viewBox="0 0 31 30"><path d="M5 10 18 2l12 8v16l-3 3H9l-4-4z" fill="#1490df"/><path d="M18 2l12 8-15 9-6-9z" fill="#28a8ea"/><path d="m30 8-14 11 9 10h3l3-3z" fill="#50d9ff"/><path d="m28 7 3 4-14 9-3-4z" fill="#0a2c8c"/><rect y="8" width="15" height="15" rx="1.500" fill="#0f62b8"/><text x="3" y="20" font-family="Open Sans" font-weight="700" font-size="12" fill="#fff">O</text></svg>
    <div class="relative -mx-[9px] flex h-[50px] w-[48px] items-center justify-center rounded border border-[#e0e0e0] bg-[#f9f9f9]"><svg class="h-[31px] w-[31px]" viewBox="0 0 31 31" fill="none" stroke="#f33d63" stroke-width="1.700"><circle cx="15.500" cy="15.500" r="14.500"/><ellipse cx="15.500" cy="15.500" rx="10" ry="14"/><ellipse cx="15.500" cy="15.500" rx="6.500" ry="11"/></svg><span class="absolute bottom-0 left-[14px] h-1 w-5 rounded-full bg-[#0078d4]"></span></div>
    <div class="relative"><svg class="h-[30px] w-[30px]" viewBox="0 0 30 30"><circle cx="15" cy="15" r="15" fill="#45d62e"/><g fill="none" stroke="#14361b" stroke-width="1.600"><rect x="8" y="7" width="12" height="13" rx="5" transform="rotate(-25 14 14)"/><rect x="10" y="9" width="13" height="12" rx="5" transform="rotate(30 16 15)"/><path d="m6 16 4 7 13-1M12 6l11 5 1 6"/></g></svg><span class="absolute left-[11px] top-[34px] h-1 w-2 rounded-full bg-[#8a8a8a]"></span></div>
    <div class="relative"><svg class="h-[30px] w-[30px]" viewBox="0 0 30 30"><circle cx="15" cy="15" r="15" fill="#1d8eee"/><path d="M5 15h17c0-3 1-4 2-4l2 3h2c-1 3-3 3-5 3-2 5-6 7-9 7-6 0-9-3-9-9zM7 11h3v3H7zM11 11h3v3h-3zM15 11h3v3h-3zM11 7h3v3h-3zM15 7h3v3h-3z" fill="#fff"/></svg><span class="absolute left-[11px] top-[34px] h-1 w-2 rounded-full bg-[#8a8a8a]"></span></div>
    <div class="relative"><svg class="h-[30px] w-[30px]" viewBox="0 0 30 30"><defs><linearGradient id="hg" x1="0" y1="1" x2="1" y2="0"><stop offset="0" stop-color="#2442ef"/><stop offset=".5" stop-color="#82328f"/><stop offset="1" stop-color="#fa2630"/></linearGradient></defs><path d="M0 0h30v30H0z" fill="url(#hg)"/><path d="M8 22c-3-3-3-16 6-16 8 0 9 5 9 9l1 3-2 1v3h-3M11 20c-2-4-2-10 3-10s6 6 2 8v5h-5z" fill="none" stroke="#fff" stroke-width="1.800"/></svg><span class="absolute left-[11px] top-[34px] h-1 w-2 rounded-full bg-[#8a8a8a]"></span></div>
    <div class="relative"><svg class="h-[30px] w-[30px]" viewBox="0 0 30 30"><circle cx="15" cy="15" r="13.500" fill="#45d62e"/><path d="m14 15-6-3m6 3 6-6m-5 6 1 7" stroke="#0c1f10" stroke-width="3"/><circle cx="14.500" cy="15" r="3.500" fill="#0c1f10"/><circle cx="9" cy="12" r="2" /><circle cx="20" cy="9" r="2"/><circle cx="16" cy="21" r="2.300"/></svg><span class="absolute left-[11px] top-[34px] h-1 w-2 rounded-full bg-[#8a8a8a]"></span></div>
    <div class="relative"><svg class="h-[30px] w-[30px]" viewBox="0 0 30 30"><path d="M7 1h22v28H7z" fill="#21a366"/><path d="M18 1h11v9H18z" fill="#33c481"/><path d="M7 10h12v10H7z" fill="#107c41"/><path d="M18 15h11v14H7v-9h11z" fill="#185c37"/><rect y="7" width="15" height="16" rx="1.500" fill="#107c41"/><path d="m4.500 10.500 6 9m0-9-6 9" stroke="#fff" stroke-width="2.300"/></svg><span class="absolute left-[11px] top-[34px] h-1 w-2 rounded-full bg-[#8a8a8a]"></span></div>
    <div class="relative"><svg class="h-[30px] w-[30px]" viewBox="0 0 30 30"><path d="m15 0 7.500 7.500L15 15 7.500 7.500z" fill="#ff7f80"/><path d="m22.500 7.500 7.500 7.500-7.500 7.500L15 15z" fill="#8fd35f"/><path d="m15 15 7.500 7.500L15 30l-7.500-7.500z" fill="#ffe57f"/><path d="m7.500 7.500 7.500 7.500-7.500 7.500L0 15z" fill="#7faeff"/><path d="M11 5l4 5v13M15 10l6 6" stroke="#fff" stroke-width="2" fill="none"/><g fill="#fff"><circle cx="15" cy="10" r="2.200"/><circle cx="15" cy="22" r="2.200"/><circle cx="21" cy="16" r="2.200"/></g></svg><span class="absolute left-[11px] top-[34px] h-1 w-2 rounded-full bg-[#8a8a8a]"></span></div>
    <div class="relative"><svg class="h-[30px] w-[30px]" viewBox="0 0 30 30"><path d="M4 2h22v26H4z" fill="#4cc2de"/><path d="M4 27h22v3H4z" fill="#a35214"/><path d="M8 0v4M12.500 0v4M17 0v4M21.500 0v4" stroke="#0b5574" stroke-width="2.500"/><path d="M8 9.500h14M8 14.500h14M8 19.500h14" stroke="#0f5f84" stroke-width="1.700"/></svg><span class="absolute left-[11px] top-[34px] h-1 w-2 rounded-full bg-[#8a8a8a]"></span></div>
    <div class="relative"><svg class="h-[30px] w-[30px]" viewBox="0 0 30 30"><rect y="4" width="30" height="22" rx="1.500" fill="#333"/><path d="M0 4h30v4H0z" fill="#777"/><path d="M0 4h11v4H0z" fill="#bbb"/><path d="m4 11 6 5.500L4 22" stroke="#ccc" stroke-width="3" fill="none"/><path d="M13 22h8" stroke="#fff" stroke-width="2.300"/></svg><span class="absolute left-[11px] top-[34px] h-1 w-2 rounded-full bg-[#8a8a8a]"></span></div>
    <div class="relative"><svg class="h-[30px] w-[30px]" viewBox="0 0 30 30"><path d="M22 0 0 19l3 3L22 8z" fill="#0f7dc4"/><path d="M22 30 0 11l3-3 19 14z" fill="#0e6cb0"/><path d="m22 0 8 3v24l-8 3z" fill="#27a4ee"/></svg><span class="absolute left-[11px] top-[34px] h-1 w-2 rounded-full bg-[#8a8a8a]"></span></div>
    <div class="relative"><svg class="h-[30px] w-[30px]" viewBox="0 0 30 30"><path d="M4 7h21v15H4z" fill="#4277be" stroke="#a3a9b2"/><path d="M20 3c-6 0-8 4-8 8H9l5 7 5-7h-3c0-4 1-6 4-8z" fill="#27cf45"/></svg><span class="absolute left-[11px] top-[34px] h-1 w-2 rounded-full bg-[#8a8a8a]"></span></div>
  </div>
  <svg class="ml-auto h-[9px] w-[14px]" viewBox="0 0 14 9" fill="none" stroke="#222" stroke-width="1.700"><path d="m1 8 6-6.500L13 8"/></svg>
  <svg class="ml-[23px] h-[21px] w-[21px]" viewBox="0 0 21 21" fill="none" stroke="#222" stroke-width="1.400"><path d="M13 1H3a2 2 0 0 0-2 2v11a2 2 0 0 0 2 2h13M6 16v3M12 16v3M4 19.500h11M15 1h5v5l-1 2h-3l-1-2zM15 4h5M17.500 8v12"/></svg>
  <svg class="ml-[9px] h-[18px] w-[21px]" viewBox="0 0 21 18" fill="none" stroke="#222" stroke-width="1.400"><path d="M1 6h3l5-4.500v15L4 12H1zM12 6c1.500 2 1.500 4 0 6M14.500 3.500c3.300 3.500 3.300 7.500 0 11M17 1c4.500 5 4.500 11 0 16"/></svg>
  <svg class="ml-[9px] h-[18px] w-[21px]" viewBox="0 0 21 18"><rect x="2" y="4.500" width="16" height="11.500" rx="2.500" fill="none" stroke="#222" stroke-width="1.600"/><path d="M4 14l4-7.500h8.500v7.500zM18.500 8h2v4h-2z" fill="#222"/><path d="M5.500 0 0 6h2.500v4.500L8 4.500H5.500z" fill="#222" stroke="#eee"/></svg>
  <div class="ml-[13px] mr-[23px] w-[76px] text-right text-[14.500px] leading-5 text-[#222]">19:03<br>22/6/2025</div>
</div>

<script>
const nav = [['i','Panel'],['i','Vista global de EC2','ext'],['i','Eventos'],
  ['g','Instancias'],['i','Instancias'],['i','Tipos de instancia'],['i','Plantillas de lanzamiento'],['i','Solicitudes de spot'],['i','Savings Plans'],['i','Instancias reservadas'],['i','Alojamientos dedicados'],['i','Reservas de capacidad'],
  ['g','Imágenes'],['i','AMI'],['i','Catálogo de AMI'],
  ['g','Elastic Block Store'],['i','Volúmenes'],['i','Instantáneas']];
const tracks = {'Vista global de EC2': 'tracking-[0.15px]', 'Plantillas de lanzamiento': 'tracking-[0.1px]', 'Instancias reservadas': 'tracking-[-0.18px]', 'Reservas de capacidad': 'tracking-[-0.1px]'};
document.getElementById('nav').innerHTML = nav.map(([k, t, x]) => k === 'g'
  ? `<div class="${t === 'Instancias' ? 'mt-[9px]' : 'mt-[10px]'} flex h-[36px] items-center pl-[12px] text-[19px] font-bold tracking-[-0.18px] text-[#0f141a]"><svg class="mr-[10px] h-[11px] w-[13px]"><use href="#down"/></svg>${t}</div>`
  : `<div class="flex h-[35px] items-center pl-[35px] ${tracks[t] || 'tracking-[-0.05px]'}">${t}${x ? '<svg class="ml-[7px] h-[18px] w-[18px]"><use href="#ext"/></svg>' : ''}</div>`).join('');

const box = '<span class="ml-4 h-5 w-5 shrink-0 rounded-[4px] border border-[#8c8c94] bg-white"></span>';
const cols = ['Name','ID de la regla del gr...','Versión de IP','Tipo','Protocolo'];
document.getElementById('head').innerHTML = box + '<span class="ml-[12px] h-[23px] w-[2px] shrink-0 bg-[#c6c6cd]"></span>'
  + cols.map((c, i) => `<div class="${i ? 'w-[250px] pl-5' : 'w-[225px] pl-5'} flex shrink-0 items-center"><span class="flex-1 pt-[1px] ${i === 1 ? 'tracking-[-0.05px]' : ''}">${c}</span><svg class="mr-[17px] h-[11px] w-[13px]"><use href="#sort"/></svg><span class="h-[23px] w-[2px] bg-[#8c8c94]"></span></div>`).join('')
  + '<div class="shrink-0 pl-5 pt-[1px] tracking-[-0.5px]">Intervalo de puertos</div>';
const rules = [['sgr-0c2731ad6a75e6b89','SSH','22'],['sgr-0f3dac144cd698399','HTTPS','443'],['sgr-0f7a5d192763baa39','TCP personalizado','8080'],['sgr-05dec2f62d18005ac','HTTP','80'],['sgr-0226e5773a7fe9532','TCP personalizado','3000']];
document.getElementById('rows').innerHTML = rules.map(([id, type, port], i) =>
  `<div class="flex items-center ${i < 3 ? 'h-[38px] border-b border-[#ebebf0]' : i < 4 ? 'h-[39px] border-b border-[#ebebf0]' : 'h-[38px]'}">${box}<span class="ml-[34px] w-[225px]">–</span><span class="w-[250px] text-[17.5px] tracking-[0.050px]">${id}</span><span class="w-[250px]">IPv4</span><span class="w-[250px]">${type}</span><span class="w-[250px]">TCP</span><span class="text-[17.5px]">${port}</span></div>`).join('');
</script>
</body>
</html>
